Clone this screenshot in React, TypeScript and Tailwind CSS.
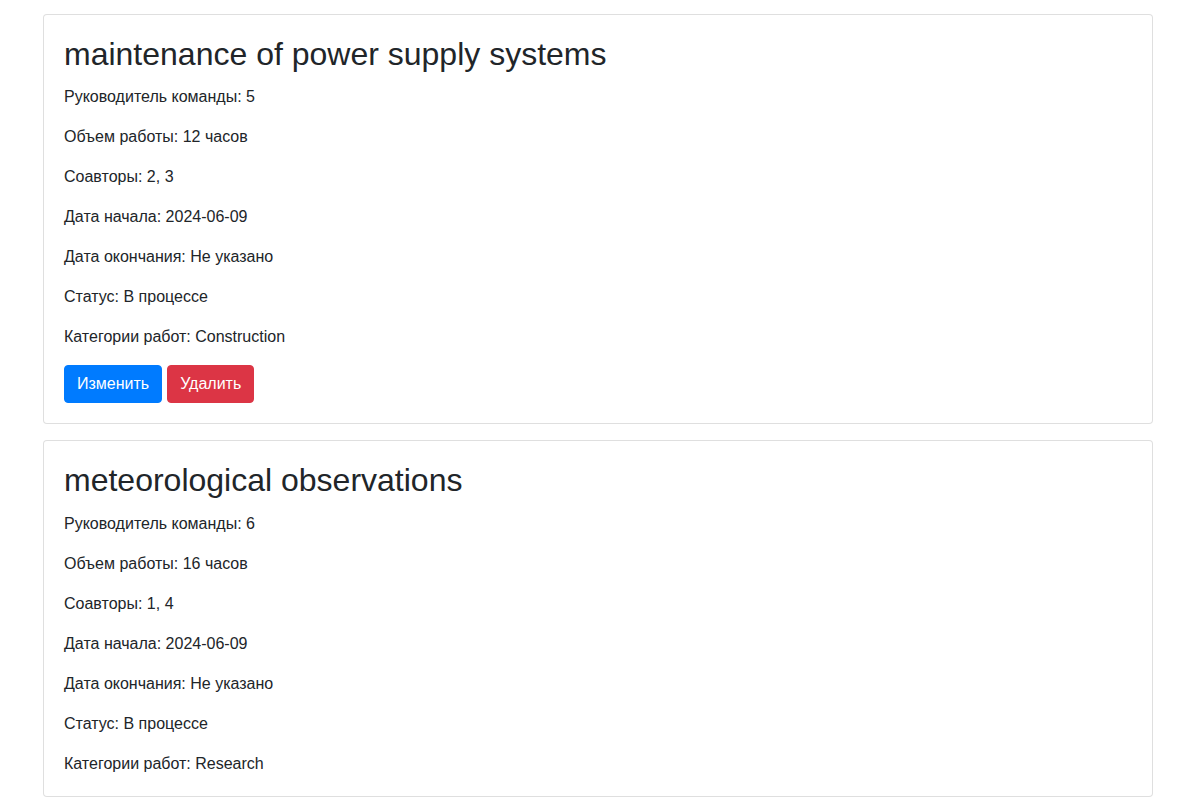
import React from "react";

type Work = {
  title: string;
  lead: string;
  hours: string;
  coauthors: string;
  start: string;
  end: string;
  status: string;
  category: string;
  actions: boolean;
};

const works: Work[] = [
  {
    title: "maintenance of power supply systems",
    lead: "5",
    hours: "12",
    coauthors: "2, 3",
    start: "2024-06-09",
    end: "Не указано",
    status: "В процессе",
    category: "Construction",
    actions: true,
  },
  {
    title: "meteorological observations",
    lead: "6",
    hours: "16",
    coauthors: "1, 4",
    start: "2024-06-09",
    end: "Не указано",
    status: "В процессе",
    category: "Research",
    actions: false,
  },
];

function Card({ w }: { w: Work }) {
  const lines = [
    `Руководитель команды: ${w.lead}`,
    `Объем работы: ${w.hours} часов`,
    `Соавторы: ${w.coauthors}`,
    `Дата начала: ${w.start}`,
    `Дата окончания: ${w.end}`,
    `Статус: ${w.status}`,
    `Категории работ: ${w.category}`,
  ];
  return (
    <div className="w-[1110px] ml-[43px] mb-4 border border-[rgba(0,0,0,0.125)] rounded-[4px] bg-white">
      <div className="p-5">
        <h2 className="text-[32px] leading-[1.2] font-normal mb-3">{w.title}</h2>
        {lines.map((l, i) => (
          <p
            key={i}
            className={`text-[16px] leading-6 ${
              i === lines.length - 1 && !w.actions ? "mb-0" : "mb-4"
            }`}
          >
            {l}
          </p>
        ))}
        {w.actions && (
          <div className="flex gap-[5px]">
            <button className="bg-[#007bff] border border-[#007bff] text-white text-[16px] leading-6 px-3 py-[6px] rounded-[4px]">
              Изменить
            </button>
            <button className="bg-[#dc3545] border border-[#dc3545] text-white text-[16px] leading-6 px-3 py-[6px] rounded-[4px]">
              Удалить
            </button>
          </div>
        )}
      </div>
    </div>
  );
}

export default function App() {
  return (
    <div
      className="bg-white text-[#212529] pt-[14px] min-h-screen"
      style={{ fontFamily: '"Liberation Sans", Arial, sans-serif' }}
    >
      {works.map((w, i) => (
        <Card key={i} w={w} />
      ))}
    </div>
  );
}
